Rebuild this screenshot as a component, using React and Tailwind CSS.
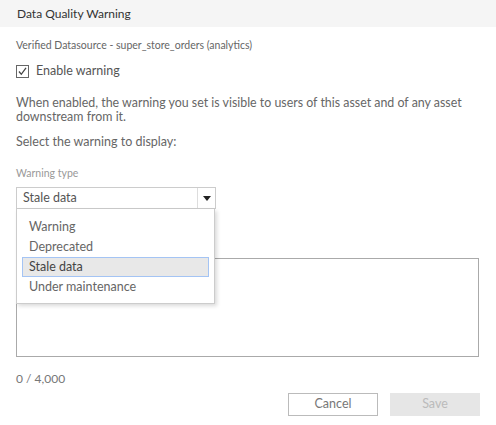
import { useState } from 'react';

const WARNING_TYPES = ['Warning', 'Deprecated', 'Stale data', 'Under maintenance'];

function CheckBox({ checked }) {
  return (
    <span className="w-[13px] h-[13px] border border-[#666] bg-white flex items-center justify-center">
      {checked && (
        <svg width="11" height="11" viewBox="0 0 11 11">
          <path d="M2 5.5 L4.3 8.3 L9 1.8" fill="none" stroke="#444" strokeWidth="1.3" />
        </svg>
      )}
    </span>
  );
}

export default function App() {
  const [selected] = useState('Stale data');

  return (
    <div className="w-[496px] h-[425px] bg-white overflow-hidden font-['Lato','Open_Sans',sans-serif]">
      {/* Header */}
      <div className="h-[27px] bg-[#f5f5f5] flex items-center pl-[17px] text-[12px] text-[#333]">
        Data Quality Warning
      </div>

      <div className="px-4">
        <div className="mt-[11px] text-[10.5px] leading-[14px] text-[#666]">
          Verified Datasource - super_store_orders (analytics)
        </div>

        <label className="mt-[11px] h-4 flex items-center gap-[7px] text-[12.5px] text-[#555]">
          <CheckBox checked />
          Enable warning
        </label>

        <p className="mt-[17px] text-[12.4px] leading-[14px] text-[#666]">
          When enabled, the warning you set is visible to users of this asset and of any asset downstream from it.
        </p>

        <p className="mt-[11px] text-[12.5px] leading-[14px] text-[#666]">Select the warning to display:</p>

        <div className="mt-[17px] text-[10.5px] leading-[14px] text-[#999]">Warning type</div>

        {/* Select + open menu */}
        <div className="relative mt-[7px] w-[200px]">
          <div className="h-[22px] border border-[#ccc] flex items-center text-[12.5px] text-[#555]">
            <span className="flex-1 pl-[6px]">{selected}</span>
            <span className="w-[18px] h-full border-l border-[#ddd] flex items-center justify-center">
              <svg width="8" height="5" viewBox="0 0 8 5">
                <path d="M0 0 H8 L4 5 Z" fill="#222" />
              </svg>
            </span>
          </div>

          <div className="absolute left-0 top-[22px] w-[199px] bg-white border border-[#ccc] border-t-0 shadow-[2px_2px_4px_rgba(0,0,0,0.15)] pt-[8px] pb-[6px] px-[5px] z-10">
            {WARNING_TYPES.map((t) => (
              <div
                key={t}
                className={
                  t === selected
                    ? 'h-5 flex items-center pl-[6px] text-[12.5px] text-[#444] bg-[#e8e8e8] border border-[#a4c4f4]'
                    : 'h-5 flex items-center pl-[7px] text-[12.5px] text-[#666]'
                }
              >
                {t}
              </div>
            ))}
          </div>
        </div>

        <textarea
          className="mt-[49px] block w-[463px] h-[99px] border border-[#aaa] resize-none outline-none"
          defaultValue=""
        />

        <div className="mt-[15px] text-[12px] leading-[14px] text-[#777]">0 / 4,000</div>

        <div className="mt-[7px] flex justify-end gap-3">
          <button className="w-[90px] h-[23px] border border-[#bbb] bg-white text-[12.5px] text-[#777]">
            Cancel
          </button>
          <button className="w-[90px] h-[23px] bg-[#e6e6e6] text-[12.5px] text-[#bbb]" disabled>
            Save
          </button>
        </div>
      </div>
    </div>
  );
}
